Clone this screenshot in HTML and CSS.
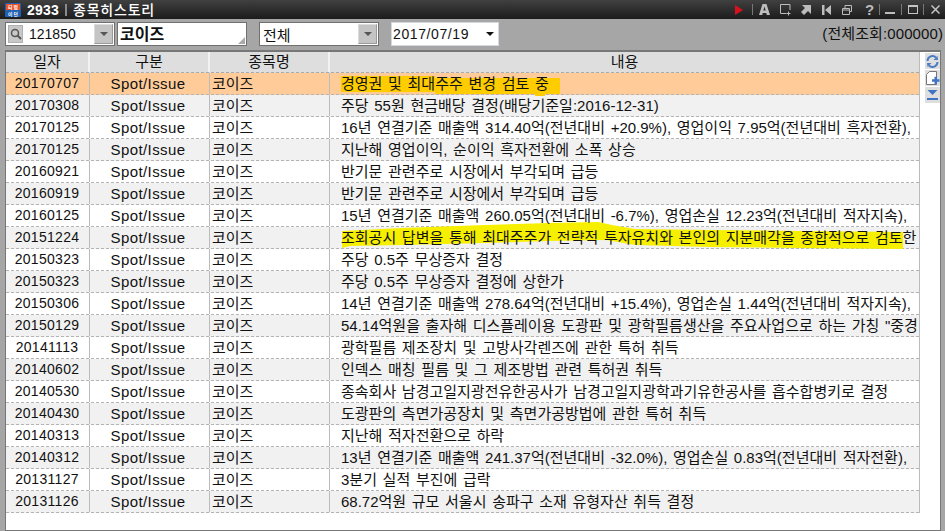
FILE: index.html
```html
<!DOCTYPE html>
<html lang="ko">
<head>
<meta charset="utf-8">
<title>종목히스토리</title>
<link rel="stylesheet" href="styles.css">
</head>
<body>
<div class="window">
  <header class="titlebar">
    <svg class="logo" width="16" height="14" viewBox="0 0 16 14"><rect width="16" height="14" rx="1" fill="#1f5fb4"/><rect x="1" y="1" width="14" height="6" fill="#e8532a"/><text x="8.500" y="5.800" class="logo-text">티럼</text><text x="8.500" y="12.800" class="logo-text">이던</text></svg>
    <span class="title-num">2933</span>
    <span class="title-sep"></span>
    <span class="title-name">종목히스토리</span>
    <div class="title-tools">
      <svg class="ic" width="8" height="10" viewBox="0 0 8 10"><path d="M0 0L8 5L0 10Z" fill="#d8121c"/></svg>
      <span class="tsep ml9"></span>
      <svg class="ic ml6" width="11" height="11" viewBox="0 0 11 11"><path d="M3.500 0H7.500L11 11H7.800L7.300 9H3.700L3.200 11H0ZM4.300 6.500H6.700L5.500 2.500Z" fill="#bcbcbc" fill-rule="evenodd"/></svg>
      <svg class="ic ml10" width="11" height="12" viewBox="0 0 11 12"><path d="M6.500 9.500H.5V.5H10V6M8.500 7.500V11.500M6.500 9.500H10.500" fill="none" stroke="#bcbcbc"/></svg>
      <svg class="ic ml10" width="10" height="10" viewBox="0 0 10 10"><path d="M1 0H10V9L7 6L3 10L0 7L4 3Z" fill="#bcbcbc"/></svg>
      <svg class="ic ml11" width="9" height="10" viewBox="0 0 9 10"><path d="M0 0H2.500V10H0ZM9 0V10L3 5Z" fill="#bcbcbc"/></svg>
      <svg class="ic ml11" width="10" height="10" viewBox="0 0 10 10"><path d="M.5 3.500H7.500V9.500H.5ZM.5 5H7.500M3 3V.5H9.500V6.500H7.500" fill="none" stroke="#bcbcbc"/></svg>
      <span class="qm ml13">?</span>
      <span class="tsep ml5"></span>
      <span class="ic-min ml5"></span>
      <span class="tsep ml6"></span>
      <span class="ic-max ml6"></span>
      <span class="tsep ml5"></span>
      <svg class="ic ml7" width="9" height="9" viewBox="0 0 9 9"><path d="M.5 .5L8.500 8.500M8.500 .5L.5 8.500" stroke="#c4c4c4" stroke-width="1.500"/></svg>
    </div>
  </header>

  <div class="toolbar">
    <div class="code-box">
      <span class="search-btn">
        <svg width="12" height="12" viewBox="0 0 12 12"><circle cx="5" cy="5" r="3.500" fill="none" stroke="#555" stroke-width="1.500"/><path d="M7.500 7.500L11 11" stroke="#555" stroke-width="2"/></svg>
      </span>
      <span class="code-text">121850</span>
      <span class="drop-btn"><i class="tri"></i></span>
    </div>
    <div class="name-box">코이즈<i class="grip"></i></div>
    <div class="select-box"><span class="select-text">전체</span><span class="drop-btn"><i class="tri"></i></span></div>
    <div class="date-box"><span>2017/07/19</span><i class="tri dark"></i></div>
    <div class="count">(전체조회:000000)</div>
  </div>

  <main class="panel">
    <div class="grid">
      <div class="row head"><div class="c1">일자</div><div class="c2">구분</div><div class="c3">종목명</div><div class="c4">내용</div></div>
      <div class="row sel"><div class="c1">20170707</div><div class="c2">Spot/Issue</div><div class="c3">코이즈</div><div class="c4">경영권 및 최대주주 변경 검토 중</div></div>
      <div class="row alt"><div class="c1">20170308</div><div class="c2">Spot/Issue</div><div class="c3">코이즈</div><div class="c4">주당 55원 현금배당 결정(배당기준일:2016-12-31)</div></div>
      <div class="row"><div class="c1">20170125</div><div class="c2">Spot/Issue</div><div class="c3">코이즈</div><div class="c4">16년 연결기준 매출액 314.40억(전년대비 +20.9%), 영업이익 7.95억(전년대비 흑자전환),</div></div>
      <div class="row alt"><div class="c1">20170125</div><div class="c2">Spot/Issue</div><div class="c3">코이즈</div><div class="c4">지난해 영업이익, 순이익 흑자전환에 소폭 상승</div></div>
      <div class="row"><div class="c1">20160921</div><div class="c2">Spot/Issue</div><div class="c3">코이즈</div><div class="c4">반기문 관련주로 시장에서 부각되며 급등</div></div>
      <div class="row alt"><div class="c1">20160919</div><div class="c2">Spot/Issue</div><div class="c3">코이즈</div><div class="c4">반기문 관련주로 시장에서 부각되며 급등</div></div>
      <div class="row"><div class="c1">20160125</div><div class="c2">Spot/Issue</div><div class="c3">코이즈</div><div class="c4">15년 연결기준 매출액 260.05억(전년대비 -6.7%), 영업손실 12.23억(전년대비 적자지속),</div></div>
      <div class="row alt"><div class="c1">20151224</div><div class="c2">Spot/Issue</div><div class="c3">코이즈</div><div class="c4">조회공시 답변을 통해 최대주주가 전략적 투자유치와 본인의 지분매각을 종합적으로 검토한</div></div>
      <div class="row"><div class="c1">20150323</div><div class="c2">Spot/Issue</div><div class="c3">코이즈</div><div class="c4">주당 0.5주 무상증자 결정</div></div>
      <div class="row alt"><div class="c1">20150323</div><div class="c2">Spot/Issue</div><div class="c3">코이즈</div><div class="c4">주당 0.5주 무상증자 결정에 상한가</div></div>
      <div class="row"><div class="c1">20150306</div><div class="c2">Spot/Issue</div><div class="c3">코이즈</div><div class="c4">14년 연결기준 매출액 278.64억(전년대비 +15.4%), 영업손실 1.44억(전년대비 적자지속),</div></div>
      <div class="row alt"><div class="c1">20150129</div><div class="c2">Spot/Issue</div><div class="c3">코이즈</div><div class="c4">54.14억원을 출자해 디스플레이용 도광판 및 광학필름생산을 주요사업으로 하는 가칭 "중경</div></div>
      <div class="row"><div class="c1">20141113</div><div class="c2">Spot/Issue</div><div class="c3">코이즈</div><div class="c4">광학필름 제조장치 및 고방사각렌즈에 관한 특허 취득</div></div>
      <div class="row alt"><div class="c1">20140602</div><div class="c2">Spot/Issue</div><div class="c3">코이즈</div><div class="c4">인덱스 매칭 필름 및 그 제조방법 관련 특허권 취득</div></div>
      <div class="row"><div class="c1">20140530</div><div class="c2">Spot/Issue</div><div class="c3">코이즈</div><div class="c4">종속회사 남경고일지광전유한공사가 남경고일지광학과기유한공사를 흡수합병키로 결정</div></div>
      <div class="row alt"><div class="c1">20140430</div><div class="c2">Spot/Issue</div><div class="c3">코이즈</div><div class="c4">도광판의 측면가공장치 및 측면가공방법에 관한 특허 취득</div></div>
      <div class="row"><div class="c1">20140313</div><div class="c2">Spot/Issue</div><div class="c3">코이즈</div><div class="c4">지난해 적자전환으로 하락</div></div>
      <div class="row alt"><div class="c1">20140312</div><div class="c2">Spot/Issue</div><div class="c3">코이즈</div><div class="c4">13년 연결기준 매출액 241.37억(전년대비 -32.0%), 영업손실 0.83억(전년대비 적자전환),</div></div>
      <div class="row"><div class="c1">20131127</div><div class="c2">Spot/Issue</div><div class="c3">코이즈</div><div class="c4">3분기 실적 부진에 급락</div></div>
      <div class="row alt"><div class="c1">20131126</div><div class="c2">Spot/Issue</div><div class="c3">코이즈</div><div class="c4">68.72억원 규모 서울시 송파구 소재 유형자산 취득 결정</div></div>
      <svg class="marks" width="914" height="461" viewBox="6 52 914 461">
        <path d="M341 76H435V78H560V94H545V96H535V94H435V92H341Z" fill="#ffcc00"/>
        <path d="M342 231L402 228L485 225L548 223L598 222L612 225L635 229L710 230L800 231L903 232V249L800 248L710 247L635 245L606 240L548 241L485 243L402 245L350 246L342 248Z" fill="#f6f000"/>
      </svg>
    </div>
    <aside class="side">
      <span class="side-btn"><svg width="13" height="13" viewBox="0 0 13 13"><path d="M1.500 6A5 5 0 0 1 10 2.500M11.500 7A5 5 0 0 1 3 10.500" fill="none" stroke="#4a7cc4" stroke-width="2"/><path d="M7.500 5L12 5L11.500 1ZM5.500 8L1 8L1.500 12Z" fill="#4a7cc4"/></svg></span>
      <span class="side-btn"><svg width="14" height="15" viewBox="0 0 14 15"><path d="M3.500 .5H10.500V13.500H.5V3.500Z" fill="#fff" stroke="#777"/><path d="M6 9.500H13.500M9.750 5.750V13.250" stroke="#3f74c4" stroke-width="2.500"/></svg></span>
      <span class="side-btn"><svg width="13" height="13" viewBox="0 0 13 13"><path d="M1.500 1H11.500L6.500 6Z" fill="#3f74c4"/><rect x="1" y="9" width="11" height="2" fill="#3f74c4"/></svg></span>
    </aside>
  </main>
</div>
</body>
</html>
```

FILE: styles.css
```css
* { box-sizing: border-box; }
html, body { margin: 0; padding: 0; }
body { width: 945px; height: 531px; overflow: hidden; background: #fff; font-family: "Liberation Sans", "Noto Sans CJK KR", sans-serif; color: #111; }
.window { width: 945px; height: 531px; display: flex; flex-direction: column; background: #a6a6a6; }

.titlebar { height: 19px; flex: none; display: flex; align-items: center; padding: 0 5px; background: linear-gradient(#404040, #1c1c1c); color: #fff; }
.logo { flex: none; margin-right: 6px; }
.logo-text { font: bold 4.800px "Noto Sans CJK KR", sans-serif; letter-spacing: 1.200px; fill: #fff; text-anchor: middle; }
.title-num { font: bold 14px "Liberation Sans", sans-serif; letter-spacing: .2px; }
.title-sep { width: 2px; height: 12px; margin: 0 6px; background: #8a8a8a; }
.title-name { font: 500 14px "Noto Sans CJK KR", sans-serif; letter-spacing: .8px; line-height: 19px; }
.title-tools { margin-left: auto; display: flex; align-items: center; height: 19px; }
.ic { flex: none; display: block; }
.ml5 { margin-left: 5px; }
.ml6 { margin-left: 6px; }
.ml7 { margin-left: 7px; }
.ml9 { margin-left: 9px; }
.ml10 { margin-left: 10px; }
.ml11 { margin-left: 11px; }
.ml13 { margin-left: 13px; }
.tsep { width: 1px; height: 11px; background: #777; flex: none; }
.qm { font: bold 15px "Liberation Sans", sans-serif; color: #bcbcbc; width: 9px; text-align: center; }
.ic-min { width: 10px; height: 2px; background: #bcbcbc; position: relative; top: 3px; }
.ic-max { width: 10px; height: 9px; border: 1px solid #c4c4c4; border-top-width: 2px; }

.toolbar { height: 31px; flex: none; display: flex; align-items: flex-start; padding: 3px 2px 0 5px; font-size: 14px; }
.code-box { width: 110px; height: 24px; background: #fff; border: 1px solid #707070; display: flex; align-items: center; padding: 1px; }
.search-btn { width: 15px; height: 18px; margin-left: 1px; background: #c8c8c8; border: 1px solid #b0b0b0; display: flex; align-items: center; justify-content: center; flex: none; }
.code-text { flex: 1; padding-left: 6px; }
.drop-btn { width: 19px; height: 20px; background: #c4c4c4; border: 1px solid #dcdcdc; border-right-color: #999; border-bottom-color: #999; display: flex; align-items: center; justify-content: center; flex: none; }
.tri { width: 0; height: 0; border-left: 4px solid transparent; border-right: 4px solid transparent; border-top: 4px solid #555; display: block; }
.tri.dark { border-top-color: #111; margin-left: auto; }
.name-box { position: relative; width: 130px; height: 24px; margin-left: 2px; background: #fff; border: 1px solid #707070; font: bold 16px "Noto Sans CJK KR", sans-serif; line-height: 21px; padding-left: 2px; }
.grip { position: absolute; right: 1px; bottom: 1px; width: 0; height: 0; border-left: 7px solid transparent; border-bottom: 7px solid #aaa; }
.select-box { width: 120px; height: 24px; margin-left: 12px; background: #fff; border: 1px solid #707070; display: flex; align-items: center; padding: 1px; }
.select-text { flex: 1; padding-left: 2px; font: 15px "Noto Sans CJK KR", sans-serif; }
.date-box { width: 108px; height: 24px; margin-left: 12px; background: #fff; border: 1px solid #d4d8e0; display: flex; align-items: center; padding: 0 4px 0 1px; letter-spacing: .6px; }
.count { margin-left: auto; line-height: 24px; font-size: 15px; letter-spacing: .1px; }

.panel { height: 481px; flex: none; margin: 0 4px 0 5px; display: flex; background: #fff; border: 1px solid #777; border-top-width: 2px; }
.grid { position: relative; width: 914px; flex: none; align-self: flex-start; border-right: 1px solid #bbb; }
.row { height: 22px; display: flex; font-size: 15px; line-height: 21px; border-bottom: 1px dashed #b4b4b4; background: #fff; }
.row > div { flex: none; white-space: nowrap; overflow: hidden; position: relative; z-index: 1; }
.c1 { width: 84px; padding-right: 1px; text-align: center; border-right: 1px solid #bbb; font-size: 14px; letter-spacing: .3px; }
.c2 { width: 120px; padding-right: 3px; text-align: center; border-right: 1px solid #bbb; letter-spacing: .4px; }
.c3 { width: 120px; padding-left: 2px; border-right: 1px solid #bbb; }
.c4 { width: 589px; padding-left: 11px; word-spacing: 1.500px; }
.alt { background: #f1f1f1; }
.sel { background: #ffcc99; }
.row.head { height: 21px; background: #dedede; line-height: 20px; border-bottom: 1px dashed #aaa; }
.row.head > div { text-align: center; padding: 0; border-right: 2px solid #f2f2f2; font-size: 15px; letter-spacing: 0; }
.row.head > .c4 { border-right: 0; }
.marks { position: absolute; left: 0; top: 0; z-index: 0; }

.side { flex: 1; display: flex; flex-direction: column; gap: 1px; padding: 1px 0 0 5px; }
.side-btn { width: 15px; height: 16px; background: #dedede; display: flex; align-items: center; justify-content: center; }
```
